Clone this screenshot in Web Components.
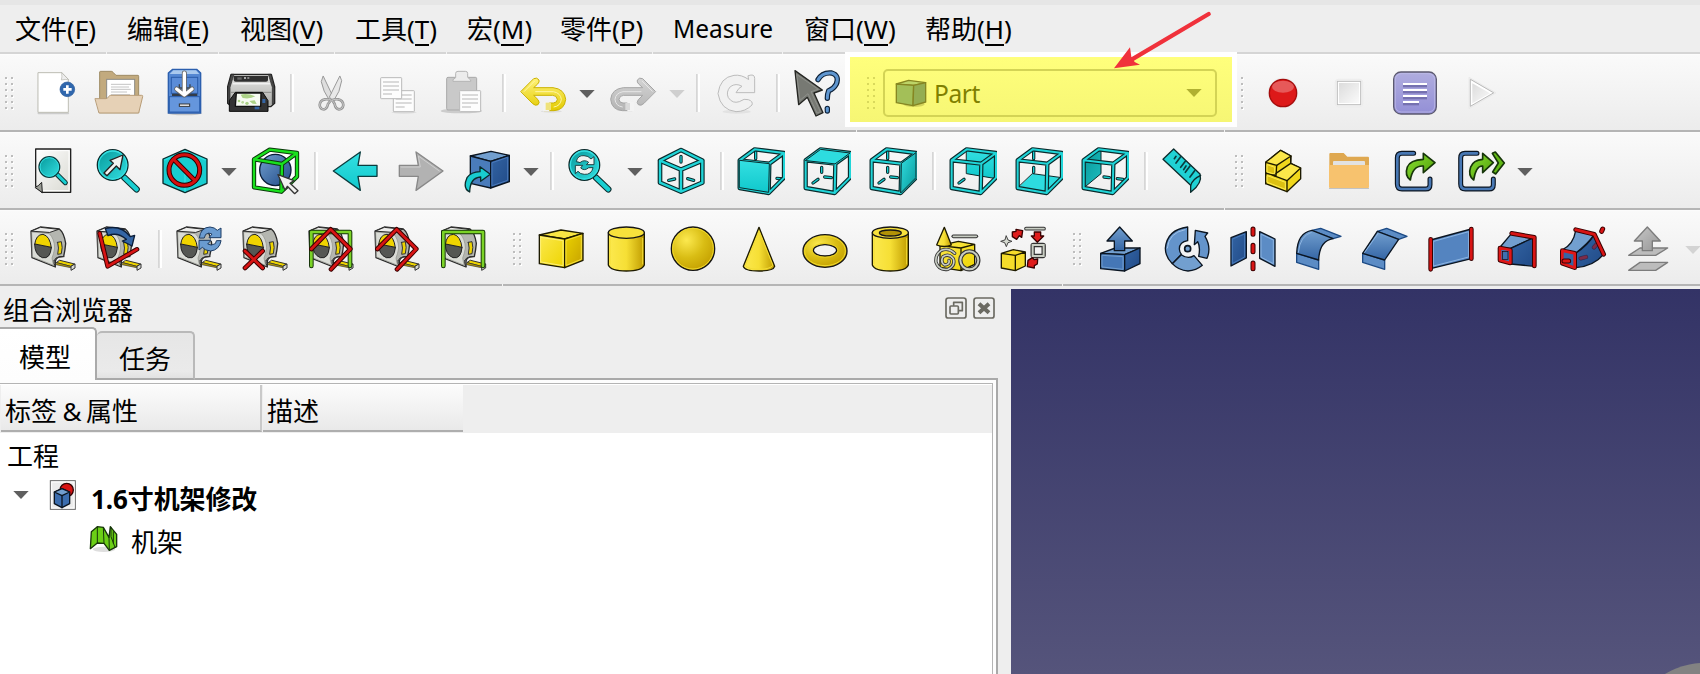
<!DOCTYPE html>
<html lang="zh">
<head>
<meta charset="utf-8">
<title>FreeCAD</title>
<style>
html,body{margin:0;height:674px;overflow:hidden;background:#eee}
body{font-family:"Noto Sans","Noto Sans CJK SC",sans-serif;font-size:26px;color:#000}
</style>
</head>
<body>
<cad-window></cad-window>
<script>
/* ---------- drawing helpers (icon units are a third of a pixel) ---------- */
const p=(d,f='none',s='#151515',w=4,x='')=>`<path d="${d}" fill="${f}" stroke="${s}" stroke-width="${w}" stroke-linejoin="round" stroke-linecap="round" ${x}/>`;
const pipe=(d,c,w=5,o='#0b2b2c',e=6)=>p(d,'none',o,w+e)+p(d,'none',c,w);
const circ=(x,y,r,f,s='#151515',w=4)=>`<circle cx="${x}" cy="${y}" r="${r}" fill="${f}" stroke="${s}" stroke-width="${w}"/>`;
const ell=(x,y,rx,ry,f,s='#151515',w=4)=>`<ellipse cx="${x}" cy="${y}" rx="${rx}" ry="${ry}" fill="${f}" stroke="${s}" stroke-width="${w}"/>`;
const rect=(x,y,w,h,f,s='none',sw=3,r=0)=>`<rect x="${x}" y="${y}" width="${w}" height="${h}" rx="${r}" fill="${f}" stroke="${s}" stroke-width="${sw}"/>`;
const at=(dx,dy,s)=>`<g transform="translate(${dx} ${dy})">${s}</g>`;
const lg=(id,a,b,c,v='x1="0" y1="0" x2="1" y2="1"')=>`<linearGradient id="${id}" ${v}><stop offset="0" stop-color="${a}"/>${c?`<stop offset=".5" stop-color="${b}"/><stop offset="1" stop-color="${c}"/>`:`<stop offset="1" stop-color="${b}"/>`}</linearGradient>`;
const V='x1="0" y1="0" x2="0" y2="1"',H='x1="0" y1="0" x2="1" y2="0"';
const DEFS='<defs>'+lg('cy','#34e0e2','#06989a')+lg('cyv','#34e0e2','#10c8cc',0,V)+lg('cyr','#06989a','#34e0e2')+lg('cyd','#06989a','#1fbdbf')+lg('ye','#fce94f','#edd400')+lg('yd','#edd400','#c4a000')
 +lg('yh','#fce94f','#f6df35','#c09c00',H)+lg('bl','#729fcf','#204a87')+lg('bv','#729fcf','#3465a4',0,V)+lg('bd','#3465a4','#204a87')
 +lg('gr','#8ae234','#4e9a06')+lg('gy','#c8c8c8','#969696')+lg('pu','#b0addf','#938fd6',0,V)+lg('pap','#ffffff','#d9d9d2')+lg('st','#dcdcdc','#fafafa')
 +lg('uy','#fff27a','#e3cb00',0,V)+lg('fade','#d4d4d4','#b4b4b4',0,V)+lg('pr','#e6e6e4','#a9aaa7',0,V)
 +'<radialGradient id="sp" cx=".35" cy=".3" r=".75"><stop offset="0" stop-color="#fce94f"/><stop offset=".55" stop-color="#d9bd14"/><stop offset="1" stop-color="#c4a000"/></radialGradient></defs>';

const tri=(x,y,c='#5f5f5f')=>p(`M${x} ${y}h46l-23 24z`,c,'none',0);
const sep=(x,y)=>rect(x,y,5,114,'#d6d6d6')+rect(x+6,y,6,114,'#fff');
const grip=(x,y,cols=2)=>{let s='';for(let c=0;c<cols;c++)for(let r=0;r<6;r++)s+=rect(x+c*18+3,y+r*18+3,6,6,'#fff')+rect(x+c*18,y+r*18,6,6,'#bdbdbd');return s};

/* tape measure, drawn where the first one sits in its row */
const tape=dx=>at(dx,0,
 p('M93 303L121 291L178 297Q192 308 197 340Q195 363 191 379L178 381Q166 386 166 396V411L96 383Z','#b4b6b0','#2a2a2a',4)
 +p('M96 306L148 311Q163 326 164 354Q161 372 156 384Q158 398 161 406L98 381Z','#dadcd6','#8f918b',2)
 +p('M95 303L121 292L176 298L150 307Z','#ececea','#2a2a2a',3)
 +p('M104 343Q108 313 129 313Q150 318 154 353Z','#f0d400','#222',3)+p('M104 343Q104 374 127 383Q151 388 154 353Z','#555753','#222',3)
 +p('M173 337L184 335Q189 352 184 371L173 373Q178 354 173 337Z','#edd400','#333',3)
 +p('M162 392Q166 382 178 380H192M166 410Q160 400 162 392','none','#333',3)
 +p('M180 391L224 402L212 409L170 398Z','#edd400','#333',3)
 +p('M170 398L212 409V413L168 404Z','#b79b00','#333',2)
 +p('M225 403V414L213 421V410Z','#d8dad5','#333',3));
/* glass cube used by the standard views */
const FRAME='M0 90L45 57L133 68L89 100ZM0 90V173L87 188L89 100M87 188L133 142V68';
const STUB='M48 111V126M22 158L37 147M57 140L77 142';
const view=(x,back,front,stub)=>at(x,1,back+(stub?pipe(stub,'#16d0d2',4):'')+pipe(FRAME,'#20d5d8',6,'#0b2b2c',7)+front);
const tint=(d,f='url(#cyv)')=>p(d,f,'#0b2b2c',3);
const lens=(x,y)=>pipe(`M${x+35} ${y+38}L${x+72} ${y+73}`,'#18cfd2',13)+circ(x,y,46,'url(#cyr)','#0b2b2c',4)+circ(x,y,42,'none','#34e0e2',4);
const exportBox=x=>at(x,0,pipe('M551 70H515Q502 70 502 84V162Q502 177 516 177H587Q600 177 600 164V147','#4878b4',8,'#0b1521',7)+p('M541 150Q523 137 532 111Q540 90 580 88V70L615 98L580 128V108Q548 106 541 150Z','url(#gr)','#17360a',5));

const ICON={};
const def=(n,ox,x0,x1,s,oy)=>ICON[n]={ox,x0,x1,s,oy};
const rows={file:{top:65,h:55,at:[]},view:{top:145,h:51,at:[]},part:{top:224,h:50,at:[]}};
const put=(row,n,ox,x0,x1,s,oy)=>{def(n,ox,x0,x1,s,oy);rows[row].at.push(n)};

/* ---------- file row ---------- */
const A=(...a)=>put('file',...a,0);
A('grip1',0,12,48,grip(15,231));
A('new',0,99,234,p('M115 340H205','none','#ccc',5)+p('M115 218H185L205 238V337H115Z','#fff','#bdbdb4',3)+p('M185 218Q187 232 184 240Q196 237 205 239Z','#eee','#b5b5ae',2)+circ(202,268,22,'#3067ad','#26579a',2)+p('M202 256V281M190 268H215','none','#fff',8,'style="stroke-linecap:butt"'));
A('open',0,279,435,p('M299 337V216Q299 214 302 214H334Q338 214 340 218L348 226H414Q416 226 416 229V337Z','#c2aa7e','#9e8b64',3)+rect(320,238,84,70,'#fff','#8a8a86',3)+p('M334 253H392M334 261H386M334 268H391M334 276H380M334 284H389','none','#c4c4c4',3)+p('M286 296H318Q323 296 326 290Q328 286 332 286H425Q429 286 428 290L416 339H298Z','#e6d1b6','#b89d78',3));
A('save',0,495,612,ell(554,340,52,6,'#c5c5c5','none',0)+p('M505 219L518 208H590L602 219V339H505Z','#5487d2','#2c5fae',4)+p('M509 222L520 211H588L598 222Z','#a9c9ee','none',0)+rect(514,232,79,48,'#5a8cd8','#2b5cab',3)+rect(516,281,76,8,'#333c48')+rect(508,290,91,46,'#6596dd','#2c5fae',3)+rect(538,312,31,7,'#fff','#333',3)+p('M538 254V264H570V254','none','#384450',4)+p('M553 219V281M530 267L553 285L576 267','none','#666',15)+p('M553 219V281M530 267L553 285L576 267','none','#fff',10));
A('print',0,675,831,p('M693 223H814L824 260V310L812 320H695L683 310V260Z','url(#pr)','#222',4)+p('M684 265L694 223H702L690 262V313L684 310Z','#4c4c4c','#222',2)+p('M823 265L813 223H805L817 262V313L822 310Z','#4c4c4c','#222',2)+p('M701 227H804V240Q804 245 798 245H707Q701 245 701 240Z','#2f2f2f','none',0)+rect(712,232,13,7,'#666')+rect(732,231,6,6,'#aaa')+rect(742,231,6,6,'#888')+p('M694 277H813','none','#8b8c89',3)+rect(698,250,112,3,'#fff')+p('M688 333V302L706 277H788L804 302V333Z','#333','#0b0b0b',3)+p('M709 279H783L782 319H706Z','#f7fbf2','#111',4)+p('M722 284Q742 279 766 289Q750 298 728 294ZM748 303L764 301L770 312L758 311Z','#acd287','none',0)+circ(717,303,4,'#acd287','none',0)+circ(728,307,4,'#b9d99a','none',0)+circ(741,310,5,'#acd287','none',0)+rect(764,320,14,8,'#3465a4')+rect(787,297,9,12,'#3465a4'));
A('sep1',0,870,882,sep(870,222));
A('cut',0,945,1044,p('M970 229L999 290L990 304Q968 272 964 246Z','#dedede','#999',3)+p('M1020 229L1025 242Q1021 275 1000 304L989 292Z','#e8e8e8','#999',3)+p('M993 300Q985 297 975 298Q960 300 959 315Q960 328 972 328Q981 327 984 312Z','none','#949494',8)+p('M997 300Q1005 297 1015 298Q1029 301 1030 315Q1028 328 1017 328Q1006 326 1004 312Z','none','#949494',8)+p('M993 300Q985 297 975 298Q960 300 959 315Q960 328 972 328Q981 327 984 312Z','none','#c8c8c8',3)+p('M997 300Q1005 297 1015 298Q1029 301 1030 315Q1028 328 1017 328Q1006 326 1004 312Z','none','#c8c8c8',3));
const sheet=(x,y,n)=>rect(x,y,63,63,'#fdfdfd','#bababa',3,2)+Array.from({length:n},(_,i)=>rect(x+7,y+10+i*12,i==n-1?27:48,6,'#dadada')).join('');
A('copy',0,1131,1254,ell(1212,337,38,4,'#ddd','none',0)+sheet(1180,272,4)+sheet(1142,233,4));
A('paste',420,60,192,ell(124,333,62,7,'#ccc','none',0)+rect(80,232,90,98,'#c9c9c9','#a9a9a9',3,4)+p('M107 232V220Q107 214 114 214H136Q143 214 143 220V232L152 240V244H99V240Z','#ececec','#b5b5b5',3)+sheet(119,272,4));
A('sep2',420,246,258,sep(246,222));
const bend='M303 274L341 236Q351 231 357 240Q359 246 353 252L341 263H399Q434 267 437 298Q434 330 402 332H372V309H400Q412 308 412 298Q410 286 398 286H341L354 299Q361 308 354 314Q346 319 338 311Z';
A('undo',420,297,444,ell(394,334,32,4,'#ddd','none',0)+p(bend,'url(#uy)','#cbb200',3)+p('M313 274L343 244M347 275H400Q422 279 424 298Q422 318 402 321','none','#fff6a5',3)+rect(368,306,20,28,'#f3f3f0','none',0)+rect(377,308,16,22,'#efe27a'));
A('dd1',420,471,528,tri(478,270));
A('redo',420,564,711,p(bend,'url(#fade)','#a5a5a5',3,'transform="matrix(-1 0 0 1 1009 0)"')+p('M697 274L667 244M663 275H609Q587 279 585 298Q587 318 607 321','none','#e6e6e6',3)+rect(622,306,20,28,'#f3f3f3','none',0)+rect(616,309,14,21,'#dadada'));
A('dd2',420,741,798,tri(748,270,'#cfcfcf'));
A('sep3',420,828,840,sep(828,222));
A('refresh',420,888,1011,ell(950,335,42,6,'#e2e2e2','none',0)+p('M985 227Q1004 220 1004 235V278H948L957 265L966 259Q948 248 931 260Q917 276 925 293Q938 312 958 305Q973 294 985 299Q1000 304 996 315Q976 335 948 335Q902 330 894 281Q900 232 942 226Q964 223 985 238Z','#f1f1f1','#bcbcbc',3));
A('sep4',420,1068,1080,sep(1068,222));
A('help',420,1116,1266,p('M1125 212L1207 270L1182 279L1209 338L1188 348L1162 292L1136 314Z','#777973','#242522',4)+p('M1131 224L1195 268L1173 275L1201 335L1191 339L1164 281L1141 300Z','none','#8e908b',3)+pipe('M1194 239Q1207 216 1235 219Q1259 226 1249 252Q1241 267 1226 272Q1222 282 1222 295','#5f96d0',9,'#0c2037',7)+pipe('M1222 325V333','#5f96d0',9,'#0c2037',7));
const D=(...a)=>put('file',...a,40);
rows.file.at.push('COMBO');
D('grip1b',1200,120,132,grip(123,111,1));
D('record',1200,198,300,circ(249,159,46,'#ececec','none',0)+circ(249,159,41,'#dd1919','#a50b0b',4)+`<ellipse cx="249" cy="140" rx="33" ry="18" fill="#fff" opacity=".28"/>`);
D('stop',1200,402,492,rect(406,118,82,82,'#f3f3f3','#eaeaea',2,8)+rect(412,124,70,70,'#fff','#bcbcbc',3)+rect(417,129,60,60,'url(#st)'));
D('macro',1200,576,714,rect(581,96,128,126,'url(#pu)','#5c5a70',4,22)+rect(586,101,118,115,'none','#c3c0ea',2,18)+[131,149,167,185].map((y,i)=>rect(609,y+3,i==3?48:72,8,'#7571b0')+rect(609,y-2,i==3?48:72,6,'#fff')).join(''));
D('play',1200,801,891,p('M807 113V206L887 159Z','#f0f0f0','#eaeaea',3)+p('M811 119V199L880 159Z','#fff','#bababa',3)+p('M817 190V130L870 160Z','url(#st)','none',0));

/* ---------- view row ---------- */
const B=(n,ox,x0,x1,s)=>put('view',n,ox,x0,x1,s,130);
B('grip2',0,12,48,grip(15,75));
B('fit',0,102,216,p('M107 57H212V187H126L107 168Z','url(#pap)','#222',4)+p('M112 62H207V182H130','none','#fff',3)+p('M106 172Q114 170 125 157L127 187Z','#999b94','#222',3)+pipe('M172 134L196 158','#18cfd2',9)+circ(148,111,31,'url(#cyr)','#0b3c3e',4)+circ(148,111,28,'none','#34e0e2',3));
B('zoomsel',0,285,429,lens(338,105)+p('M312 129L340 100L330 91L369 75L360 119L349 108L321 137Z','#f2f2f0','#222',4));
B('style',0,483,627,p('M489 87L555 58L621 87V160L555 188L489 160Z','#18cdd0','#0b2b2c',4)+p('M494 90L555 64L616 90M555 120V183','none','#34e0e2',4)+circ(553,120,46,'none','#2a0000',15)+p('M521 88L585 152','none','#2a0000',15)+circ(553,120,46,'none','#d40f0f',9)+p('M521 88L585 152','none','#d40f0f',9));
B('dd3',0,660,717,tri(664,114));
B('bbox',0,753,900,p('M762 85L808 60L891 68V139L845 186L762 172Z','#fff','none',0)+circ(826,120,47,'url(#bl)','#0b1d38',4)+at(762,-2,pipe('M0 90L47 61L129 71L84 104ZM0 90V174L82 187L84 104M82 187L129 142V71','#19e11d',7,'#0a3a0a',6))+p('M834 134L882 152L870 160L894 182L884 191L862 169L855 180Z','#f2f2f0','#333',4));
B('sep5',0,942,954,sep(942,66));
B('back',0,993,1137,p('M1000 123L1081 66L1074 106H1131V139H1074L1081 181Z','url(#cyv)','#0b3c3e',4));
B('fwd',0,1188,1335,p('M1329 123L1248 66L1255 106H1198V139H1255L1248 181Z','#b2b2b2','#888',4)+p('M1318 123L1255 78L1261 111H1203','none','#cfcfcf',3));
B('link',420,132,273,p('M151 78L213 64L268 76L212 94Z','#729fcf','#0b1521',4)+p('M151 78L212 94V174L151 160Z','#4a7cbb','#0b1521',4)+p('M268 76V155L212 174V94Z','url(#bd)','#0b1521',4)+p('M217 98L263 82V151L217 167Z','none','#4a79bb',3)+p('M149 186Q127 175 141 143Q153 126 180 125V110L211 133L182 154V141Q150 143 149 186Z','#18cdd0','#0b2b2c',4));
B('dd4',420,306,363,tri(310,114));
B('sep6',420,390,402,sep(390,66));
B('sync',420,441,585,lens(493,105)+p('M469 94Q473 75 492 77Q505 77 513 87L522 80V104H499L506 97Q493 87 481 97Z','#f2f2f0','#1a4547',3)+p('M519 114Q514 135 493 133Q481 133 474 124L466 131V106H488L482 114Q493 124 505 114Z','#f2f2f0','#1a4547',3));
B('dd5',420,618,675,tri(622,114));
B('iso',420,711,858,pipe('M783 79V96M746 151L764 147M803 146L821 151','#16d0d2',4)+pipe('M783 60L720 92V158L783 185L847 158V92ZM720 92L783 119L847 92M783 119V185','#20d5d8',7,'#0b2b2c',7));
B('sep7',420,900,912,sep(900,66));
B('front',420,951,1095,view(959,'',tint('M0 90L89 100L87 186L0 172Z'),'M48 62V85M112 144L130 146'));
B('top',420,1149,1293,view(1157,'',tint('M0 90L45 57L133 68L89 100Z','#2ddcdf'),STUB));
B('right',840,87,231,view(95,'',tint('M133 68V142L87 188L89 100Z','url(#cy)'),STUB.replace('M48 111','M48 62V85M48 111')));
B('sep8',840,276,288,sep(276,66));
B('rear',840,327,471,view(335,tint('M45 57L133 68V145L45 130Z'),'','M22 158L37 147'));
B('bottom',840,525,669,view(533,tint('M45 130L133 142L87 188L0 173Z','#2ddcdf'),'','M48 62V85M48 111V126'));
B('left',840,723,867,view(731,tint('M45 57L52 60V130L0 173V90Z','url(#cyd)'),'','M61 140L77 142M101 145L118 147'));
B('sep9',840,912,924,sep(912,66));
B('ruler',840,963,1092,p('M969 88L1001 57L1080 132Q1088 160 1052 187V166Z','#20d2d5','#0b2b2c',4)+p('M1052 166Q1058 147 1082 136','none','#0b2b2c',4)+p('M1008 79L1003 86M1022 80L1008 99M1036 94L1022 112M1038 108L1031 119M1050 108L1036 127M1064 122L1050 141','none','#0b3c3e',5));
B('grip3',840,1182,1218,grip(1185,75));
B('brick',1230,102,216,p('M107 97L152 61L183 78L182 100L212 114V146L171 185L107 161Z','#f0d71c','#1d1a00',4)+p('M107 97L152 61L183 78L140 106ZM182 100L212 114L171 152L129 136Z','#fbe74a','#1d1a00',4)+p('M140 106L138 138L107 129M182 78V100M171 152V185M107 129V161','none','#1d1a00',4)+p('M112 137L166 157V178L112 157ZM112 104L134 112V132L112 126Z','#dcc012','#fce94f',3));
B('folder',1230,291,423,p('M298 72Q298 69 301 69H341L352 80H414Q417 80 417 84V120H298Z','#dfa850','none',0)+rect(309,93,96,20,'#e2e2e2','none',0,3)+rect(297,174,120,3,'#c2c2c2')+p('M297 105H417V171Q417 174 414 174H300Q297 174 297 171Z','#f7c26e','none',0));
B('exp1',1230,489,621,exportBox(0));
B('exp2',1230,681,828,exportBox(190).replace('580 88V70L615 98L580 128V108','568 88V70L600 98L568 128V108')+p('M787 70L796 66L823 99L797 132L788 126L805 99Z','#62b815','#17360a',5));
B('dd6',1230,858,915,tri(862,114));

/* ---------- part row ---------- */
const C=(n,ox,x0,x1,s)=>put('part',n,ox,x0,x1,s,130);
const red=(d,w=8)=>pipe(d,'#d81414',w,'#3a0000',6);
C('grip4',0,12,48,grip(15,309));
C('m1',0,87,231,tape(0));
C('m2',0,285,429,tape(198)+p('M316 296Q362 283 391 320L404 316L396 348L367 333L379 328Q352 305 324 317Z','#3465a4','#0b1d38',4)+red('M299 310L323 409L411 358'));
C('sep10',0,474,486,sep(474,300));
C('m3',0,525,669,tape(438)+rect(632,322,33,11,'#eee')+p('M598 323Q602 292 630 291Q644 292 652 301L663 294V323H627L636 312Q626 306 617 313L613 323Z','#6a9bd0','#1d3d66',3)+p('M663 333Q658 360 632 363Q615 362 607 352L597 360V331H633L623 342Q633 349 646 341L649 333Z','#6a9bd0','#1d3d66',3));
C('m4',0,723,867,tape(636)+red('M735 363L788 414M788 363L735 414'));
C('m5',0,921,1065,tape(834)+pipe('M934 408V306H1050V408','#7bd327',8,'#17360a',6)+red('M934 357L992 298L1051 357L993 418'));
C('m6',0,1119,1263,tape(1032)+red('M1132 357L1190 298L1249 357L1191 418'));
C('m7',420,57,201,tape(-28)+pipe('M70 408V306H189V408','#7bd327',8,'#17360a',6));
C('grip5',420,276,312,grip(279,309));
C('box',420,351,495,p('M358 315L423 300L489 310L434 327Z','#f9e544','#1d1a00',4)+p('M358 315L434 327V413L358 401Z','url(#ye)','#1d1a00',4)+p('M489 310V391L434 413V327Z','url(#yd)','#1d1a00',4)+p('M363 322L429 332V407L363 396Z','none','#fdf07a',3)+p('M439 331L484 316V388L439 406Z','none','#f5e03c',3));
C('cyl',420,558,681,p('M565 308V405Q572 423 619 423Q666 423 673 405V308Z','url(#yh)','#1d1a00',4)+p('M570 325V402M668 325V402','none','#f3dc35',3)+ell(619,308,54,17,'#f7e13c'));
C('sphere',420,747,891,circ(819,356,65,'url(#sp)')+circ(819,356,61,'none','#f0d92d',3));
C('cone',420,963,1071,p('M1017 292L1064 409Q1060 423 1017 423Q974 423 970 409Z','url(#yh)','#1d1a00',4)+p('M1017 305L976 407Q985 418 1017 418Q1050 418 1058 407Z','none','#f3dc35',3));
C('torus',420,1143,1287,ell(1215,363,66,49,'url(#sp)')+ell(1215,363,61,44,'none','#f0d92d',3)+ell(1215,361,35,17,'#f2f2f2')+ell(1215,361,39,21,'none','#e8cf22',3));
C('tube',840,90,213,p('M97 308V405Q104 423 151 423Q198 423 205 405V308Z','url(#yh)','#1d1a00',4)+p('M102 325V402M200 325V402','none','#f3dc35',3)+ell(151,308,54,17,'#f7e13c')+ell(151,309,33,9,'#b29206'));
C('prims',840,279,423,p('M300 347L355 334L404 343L363 354ZM300 347L363 354V422L300 412ZM404 343V403L363 422V354Z','url(#ye)','#1d1a00',4)+p('M313 292L334 345Q313 354 290 345Z','url(#yh)','#1d1a00',4)+pipe('M340 319H409','#c9cec4',5,'#333',6)+circ(388,391,27,'none','#333',13)+circ(388,391,27,'none','#c9cec4',6)+pipe('M344 370Q326 352 304 361Q285 373 288 397Q296 422 324 418Q347 407 340 386Q327 369 309 380Q300 397 314 405Q330 404 327 391','#c9cec4',5,'#333',5));
C('builder',840,477,621,p('M484 370L520 359L556 366L526 376ZM484 370L526 376V422L484 414ZM556 366V408L526 422V376Z','#f5dc2a','#1d1a00',4)+p('M499 318L504 330L516 334L504 338L499 350L494 338L482 334L494 330Z','#d5d9d0','#444',3)+p('M517 306L528 304V298L548 302L545 322L538 317L530 328L517 320Z','#df1b1b','#3a0000',4)+pipe('M558 296H612','#c9cec4',5,'#333',6)+p('M583 306H602V318H611L592 337L574 318H583Z','#df1b1b','#3a0000',4)+rect(578,345,33,33,'none','#333',13,2)+rect(578,345,33,33,'none','#c9cec4',6)+p('M564 391L577 383L583 389L593 387L592 402L583 407V414L562 410Z','#df1b1b','#3a0000',4));
C('grip6',840,696,732,grip(699,309));
C('extrude',840,774,909,p('M782 370L826 354H900L854 374Z','#729fcf','#0b1521',4)+p('M782 370L854 374V423L782 416Z','#4577b6','#0b1521',4)+p('M900 354V401L854 423V374Z','url(#bd)','#0b1521',4)+p('M787 376L849 380V418L787 411Z','none','#729fcf',3)+p('M839 291L877 333H854V362H823V333H801Z','url(#bv)','#0b1521',4));
C('revolve',840,969,1113,p('M1043 291V332Q1018 336 1018 357Q1019 368 1024 373L997 401Q976 381 976 355Q981 299 1043 291Z','#6494cb','#0b1521',4)+p('M1024 374Q1043 389 1062 377L1087 406Q1068 422 1044 423Q1015 421 997 401Z','#729fcf','#0b1521',4)+circ(1043,356,9,'#729fcf','#0b1521',5)+p('M1066 301L1103 309L1095 319Q1115 352 1101 385L1076 379Q1082 351 1073 335L1063 344Z','#6494cb','#0b1521',4)+p('M1035 299Q986 308 982 354','none','#9fc1e8',3));
C('mirror',840,1167,1311,p('M1173 323L1219 305V384L1173 408Z','url(#bd)','#0b1521',4)+p('M1178 327L1214 312V381L1178 400Z','none','#4a7cbb',3)+red('M1239 297V313M1239 346V365M1239 399V416',9)+p('M1259 305L1305 327V409L1259 385Z','#5c8cc5','#0b1521',4)+p('M1264 313L1300 330V401L1264 382Z','none','#8db5e2',3));
C('fillet',1230,195,339,p('M246 301L272 295L333 319L309 326Z','#5c8cc5','#1c4a85',4)+p('M200 370L266 390V418L200 397Z','#5c8cc5','#1c4a85',4)+p('M200 370Q202 308 246 301L309 326Q268 333 266 390Z','url(#bv)','#0b1521',4)+p('M205 367Q210 317 244 307','none','#8db5e2',3));
C('chamfer',1230,393,537,p('M442 304L470 295L531 319L506 328Z','#5c8cc5','#1c4a85',4)+p('M398 370L464 390V418L398 397Z','#5c8cc5','#1c4a85',4)+p('M398 370L442 304L506 328L464 390Z','url(#bv)','#0b1521',4)+p('M404 367L444 311','none','#8db5e2',3));
C('ruled',1230,591,735,p('M602 330L724 297V386L602 416Z','#5484c0','#0b1521',4)+p('M611 334L716 305V381L611 408Z','none','#8db5e2',3)+red('M602 328V418M724 297V386'));
C('loft',1230,798,924,p('M808 354L845 310L913 322L842 355Z','#729fcf','#0b1521',4)+p('M913 322V409L842 402V355Z','url(#bd)','#0b1521',4)+red('M845 310L913 322V408')+p('M810 354L841 360V399L810 391Z','#3465a4','#3a0000',14)+p('M810 354L841 360V399L810 391Z','#3e70b0','#e01717',8)+rect(817,364,17,24,'#3e70b0','#200',2));
C('sweep',1230,987,1131,p('M996 360Q1030 345 1037 302L1093 313Q1075 340 1034 372Z','#729fcf','#0b1521',4)+p('M1034 372Q1075 345 1093 313L1121 373Q1092 408 1038 413Z','url(#bd)','#0b1521',4)+pipe('M1092 352L1099 344M1052 385L1068 381','#7c2b49',9,'#35284d',4)+red('M1037 299L1093 313L1121 373')+p('M997 362L1034 370V413L997 400Z','#3465a4','#3a0000',14)+p('M997 362L1034 370V413L997 400Z','#3465a4','#e01717',8)+red('M1002 393H1016M1115 304L1118 297',9));
C('offset',1230,1191,1320,p('M1196 376L1230 354H1313L1277 376ZM1196 421L1230 397H1313L1277 421Z','#bcbcbc','#7c7c7c',4)+p('M1252 291L1291 333H1267V362H1237V333H1213Z','url(#gy)','#7c7c7c',4));
C('dd7',1230,1365,1410,tri(1366,348,'#d3d3d3'));

/* ---------- stand-alone glyphs ---------- */
def('cube',840,162,264,ell(222,313,32,8,'#d3d35c','none',0)+p('M169 252L206 241L257 248L221 256Z','#bdd467','#868622',4)+p('M169 252L221 256L219 317L169 308Z','#a3bf58','#868622',4)+p('M257 248V306L219 317L221 256Z','#94ad52','#868622',4),0);
def('ddc',840,1038,1086,p('M1039 267H1085L1062 291Z','#b0b031','none',0),0);
def('float',900,135,201,rect(138,54,60,60,'none','#6b6a62',5,7)+p('M161 76V67H187V92H177','none','#6b6a62',5)+rect(150,78,25,24,'#eee','#6b6a62',5,3));
def('close',900,219,285,rect(222,54,60,60,'none','#6b6a62',5,7)+p('M237 71L267 98M267 71L237 98','none','#6b6a62',12,'style="stroke-linecap:butt"'));
def('tri',0,36,90,tri(40,633));
def('doc',0,147,231,rect(151,602,75,86,'#ececec','#666',3)+rect(155,606,67,78,'none','#fff',3)+circ(200,630,20,'#d81212','#320000',4)+p('M163 636L186 626L209 636V671L186 683L163 671Z','#3b6dae','#0b1521',4)+p('M163 636L186 626L209 636L186 647Z','#729fcf','#0b1521',4)+p('M186 647V683','none','#0b1521',4));
def('mesh',0,267,354,ell(312,808,34,8,'#dedede','none',0)+p('M274 755L292 740L310 742L327 772L331 740L350 763V800L328 811L312 790L292 789L271 806Z','#6bcf16','#17360a',4)+p('M292 740V789M310 742L312 790M327 772L328 811M333 742V770L345 802M340 755V790','none','#17360a',3));

/* ---------- components ---------- */
const make=(tag,css,render)=>customElements.define(tag,class extends HTMLElement{
  constructor(){super();this.attachShadow({mode:'open'})}
  connectedCallback(){this.shadowRoot.innerHTML=`<style>${css}</style>`+render(this)}
});
make('tool-icon',':host{display:block;flex:none}svg{display:block}',el=>{
  const i=ICON[el.getAttribute('name')],y=+el.getAttribute('y'),h=+el.getAttribute('h');
  return `<svg width="${(i.x1-i.x0)/3}" height="${h}" viewBox="${i.x0} ${y} ${i.x1-i.x0} ${h*3}">${DEFS}${i.s}</svg>`;
});
make('rule-line',':host{display:flex;gap:1px;height:2px;flex:none;background:#f4f4f4}i{flex:none;background:var(--line,#b5b5b5)}i:last-child{flex:1}',el=>
  (el.getAttribute('cuts')||'').split(' ').filter(Boolean).map((c,i,a)=>`<i style="width:${c-(i?+a[i-1]+1:0)}px"></i>`).join('')+'<i></i>');
make('menu-entry',`:host{display:block;flex:none;box-sizing:border-box;height:47px;line-height:49px;white-space:nowrap}
 u{text-decoration:none;display:inline-block;line-height:35px;height:34px;border-bottom:2px solid #000;box-sizing:border-box;vertical-align:top;margin-top:7px}
 :host([latin]){font-size:24.5px;line-height:47px}`,el=>{
  const k=el.getAttribute('key');return '<slot></slot>'+(k?`(<u>${k}</u>)`:'');
});
make('menu-strip',':host{display:flex;height:47px;padding-left:15px;box-sizing:border-box}',()=>
  [['文件','F',112],['编辑','E',113],['视图','V',115],['工具','T',112],['宏','M',93],['零件','P',113],['Measure','',131],['窗口','W',121],['帮助','H',110]]
  .map(([t,k,w])=>`<menu-entry style="width:${w}px" ${k?`key="${k}"`:'latin'}>${t}</menu-entry>`).join(''));
make('workbench-picker',`:host{display:block;box-sizing:border-box;flex:none;width:392px;height:75px;border:5px solid #fff;margin-top:-13px;background:linear-gradient(#ffff7c,#f6f674);position:relative}
 .w{display:flex}.g{flex:none;width:8px;height:34px;margin:20px 0 0 17px}
 .b{display:flex;box-sizing:border-box;width:334px;height:48px;margin:12px 0 0 8px;border:2px solid #d3d355;border-radius:5px;color:#808000;font-size:24.5px;line-height:46px}
 .b tool-icon:first-child{margin:8px 6px 0 9px}.b span{letter-spacing:-.4px}.b tool-icon:last-child{margin:18px 0 0 auto;padding-right:13px}
 .g svg{display:block}`,()=>
 `<div class="w"><div class="g"><svg width="9" height="34" viewBox="0 0 9 34">${[0,1,2,3,4,5].map(r=>`<path d="M0 ${r*6}h2v2h-2zM6 ${r*6}h2v2h-2z" fill="#d9d95c"/>`).join('')}</svg></div><div class="b"><tool-icon name="cube" y="237" h="28"></tool-icon><span>Part</span><tool-icon name="ddc" y="267" h="9"></tool-icon></div></div>`);
make('tool-strip',':host{display:flex;align-items:flex-start;flex:none;box-sizing:border-box;background:linear-gradient(#fafafa,#ececec);border-top:1px solid #fcfcfc}',el=>{
  const r=rows[el.getAttribute('row')];let x=0;
  return r.at.map(n=>{
    if(n==='COMBO'){const m=845-x;x=1237;return `<workbench-picker style="margin-left:${m}px"></workbench-picker>`}
    const i=ICON[n],l=i.ox+i.x0/3,m=l-x;x=i.ox+i.x1/3;
    return `<tool-icon name="${n}" y="${(r.top-i.oy)*3}" h="${r.h}" style="margin-left:${m}px"></tool-icon>`;
  }).join('');
});
make('combo-view',`:host{display:flex;flex-direction:column;width:998px;flex:none}
 .t{display:flex;height:41px;line-height:49px;padding-left:3px}.t tool-icon{margin-top:11px}.t tool-icon:nth-of-type(1){margin:11px 6px 0 auto}.t tool-icon:last-child{margin-right:3px}
 .tabs{display:flex;align-items:flex-end;height:53px;position:relative;z-index:1}
 .a{box-sizing:border-box;width:97px;height:53px;background:linear-gradient(#fff,#fdfdfd);border-top:2px solid #aaa;border-right:2px solid #aaa;border-radius:0 5px 0 0;padding-left:19px;line-height:57px}
 .n{box-sizing:border-box;width:98px;height:49px;background:linear-gradient(#e6e6e6,#eaeaea 85%,#e2e2e2);border:2px solid #b9b9b9;border-left:0;border-bottom:2px solid #a9a9a9;border-radius:5px 5px 0 0;padding-left:22px;line-height:52px}
 .l{flex:1;height:2px;background:#a9a9a9}
 .pane{flex:1;background:#fdfdfd;border-right:2px solid #a9a9a9;padding:3px 3px 0 0;display:flex}
 .tree{flex:1;border-top:1px solid #b4b4b4;border-right:1px solid #b4b4b4;padding-top:1px;background:#fff}
 .h{display:flex;height:48px;background:#eee;gap:1px;padding-left:1px;box-sizing:border-box}
 .h div{box-sizing:border-box;height:47px;background:linear-gradient(#fcfcfc,#e9e9e9);border-bottom:2px solid #aeaeae;line-height:52px;padding-left:4px;white-space:nowrap}
 .h span{letter-spacing:-1.2px}
 .r{display:flex;height:43px;line-height:46px}`,()=>
 `<div class="t"><span>组合浏览器</span><tool-icon name="float" y="51" h="22"></tool-icon><tool-icon name="close" y="51" h="22"></tool-icon></div>
 <div class="tabs"><div class="a">模型</div><div class="n">任务</div><div class="l"></div></div>
 <div class="pane"><div class="tree"><div class="h"><div style="width:261px;border-right:2px solid #c9c9c9">标签<span> &amp; </span>属性</div><div style="width:200px">描述</div></div>
 <div class="r" style="padding-left:7px">工程</div>
 <div class="r"><tool-icon name="tri" y="630" h="12" style="margin:14px 0 0 12px"></tool-icon><tool-icon name="doc" y="597" h="32" style="margin:3px 0 0 19px"></tool-icon><b style="margin-left:14px;letter-spacing:-.1px">1.6寸机架修改</b></div>
 <div class="r"><tool-icon name="mesh" y="735" h="28" style="margin:6px 0 0 89px"></tool-icon><span style="margin-left:13px">机架</span></div></div></div>`);
make('scene-view',':host{display:block;flex:1;margin:3px 0 0 13px;overflow:hidden;background:linear-gradient(#333366,#55547b)}svg{display:block}',()=>
 '<svg width="689" height="385" viewBox="1011 289 689 385"><circle cx="1704" cy="738" r="75" fill="#828282"/></svg>');
make('callout-arrow',':host{position:absolute;left:1100px;top:5px;z-index:3}svg{display:block}',()=>
 '<svg width="120" height="70" viewBox="780 15 360 210"><path d="M1106 42L876 178" stroke="#f0313b" stroke-width="13" stroke-linecap="round"/><path d="M822 205L870 142L874 170L884 186L900 194Z" fill="#f0313b"/></svg>');
make('cad-window',`:host{display:flex;flex-direction:column;width:1700px;height:674px;overflow:hidden;background:#eee;position:relative}
 .top{height:5px;background:#e6e6e6;flex:none}.m{display:flex;flex:1;min-height:0}`,()=>
 `<div class="top"></div><menu-strip></menu-strip><rule-line style="--line:#d5d5d5" cuts="106 218 334 446 540 652 782 904 1020"></rule-line>
 <tool-strip row="file" style="height:76px;padding-top:10px"></tool-strip><rule-line cuts="856 1224"></rule-line>
 <tool-strip row="view" style="height:76px;padding-top:12px"></tool-strip><rule-line cuts="1224"></rule-line>
 <tool-strip row="part" style="height:74px;padding-top:13px"></tool-strip><rule-line cuts="502 1062"></rule-line>
 <div class="m"><combo-view></combo-view><scene-view></scene-view></div><callout-arrow></callout-arrow>`);
</script>
</body>
</html>
